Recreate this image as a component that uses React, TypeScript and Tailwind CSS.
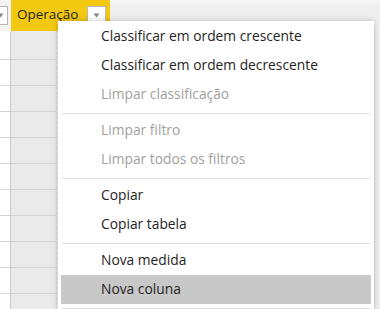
import React from 'react';

type Item = { label: string; disabled?: boolean; active?: boolean } | 'sep';

const MENU: Item[] = [
  { label: 'Classificar em ordem crescente' },
  { label: 'Classificar em ordem decrescente' },
  { label: 'Limpar classificação', disabled: true },
  'sep',
  { label: 'Limpar filtro', disabled: true },
  { label: 'Limpar todos os filtros', disabled: true },
  'sep',
  { label: 'Copiar' },
  { label: 'Copiar tabela' },
  'sep',
  { label: 'Nova medida' },
  { label: 'Nova coluna', active: true },
  'sep',
];

const Caret: React.FC = () => (
  <svg width="7" height="5" viewBox="0 0 7 5">
    <path d="M0.5 0.5 L6.5 0.5 L3.5 4.5 Z" fill="#8a8794" />
  </svg>
);

const App: React.FC = () => {
  const rows = Array.from({ length: 10 });

  return (
    <div className="relative w-[380px] h-[309px] overflow-hidden bg-[#efefef] font-['Open_Sans',sans-serif] text-[#252423]">
      {/* Header row */}
      <div className="flex h-[31px] border-t-[3px] border-[#f6f6f6]">
        <div className="w-[11px] -mt-[3px] flex items-center bg-[#f3f3f3]">
          <div className="w-[8px] h-[19px] bg-white border border-l-0 border-[#b5b5b5] flex items-center justify-start">
            <div className="-ml-[3px]"><Caret /></div>
          </div>
        </div>
        <div className="w-[99px] -mt-[3px] h-[31px] bg-[#f2c811] flex items-center pl-[6px] pr-[4px]">
          <span className="text-[13.5px] leading-none pb-[1px]">Operação</span>
          <div className="ml-auto w-[19px] h-[19px] bg-white border border-[#b9b9b9] flex items-center justify-center">
            <Caret />
          </div>
        </div>
        <div className="flex-1" />
      </div>

      {/* Grid body */}
      <div className="flex">
        <div className="w-[10px] bg-white">
          <div className="h-[29px] border-b border-[#d4d4d4]" />
          {rows.map((_, i) => (
            <div key={i} className="h-[26px] border-b border-[#d4d4d4]" />
          ))}
        </div>
        <div className="w-px bg-[#cccccc]" />
        <div className="w-[46px] bg-[#eaeaea] border-r border-dashed border-[#dadada]">
          <div className="h-[29px] border-b border-[#d4d4d4]" />
          {rows.map((_, i) => (
            <div key={i} className="h-[26px] border-b border-[#d4d4d4]" />
          ))}
        </div>
        <div className="flex-1" />
        <div className="w-[6px] border-l border-dotted border-[#d8d8d8]" />
      </div>

      {/* Context menu */}
      <div className="absolute left-[58px] top-[21px] w-[316px] bg-white pt-[1px] px-[3px] shadow-[0_0_6px_rgba(0,0,0,0.22)]">
        {MENU.map((it, i) =>
          it === 'sep' ? (
            <div key={i} className="pt-[4px] pb-[2px] px-[1px]">
              <div className="h-px bg-[#e1e1e1]" />
            </div>
          ) : (
            <div
              key={i}
              className={`h-[29px] flex items-center pl-[40px] text-[13.8px] ${
                it.active ? 'bg-[#c8c8c8]' : ''
              } ${it.disabled ? 'text-[#a19f9d]' : 'text-[#252423]'}`}
            >
              {it.label}
            </div>
          )
        )}
      </div>
    </div>
  );
};

export default App;
